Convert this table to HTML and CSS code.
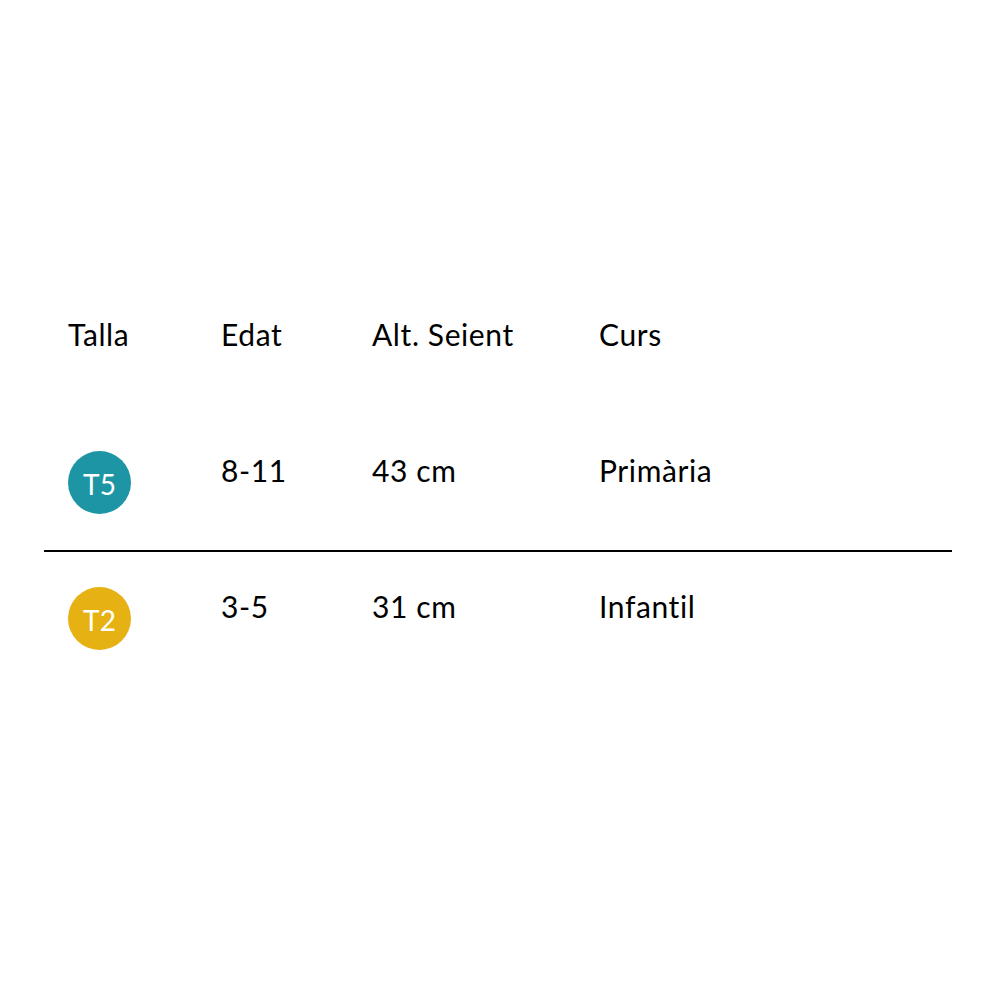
FILE: index.html
```html
<!DOCTYPE html>
<html lang="ca">
<head>
<meta charset="utf-8">
<title>Talles</title>
<link rel="stylesheet" href="styles.css">
</head>
<body>
<div class="table">
  <div class="row head">
    <div class="cell">Talla</div>
    <div class="cell">Edat</div>
    <div class="cell">Alt. Seient</div>
    <div class="cell">Curs</div>
  </div>
  <div class="row item">
    <div class="cell"><span class="badge teal">T5</span></div>
    <div class="cell">8-11</div>
    <div class="cell">43 cm</div>
    <div class="cell">Primària</div>
  </div>
  <div class="row item sep">
    <div class="cell"><span class="badge yellow">T2</span></div>
    <div class="cell">3-5</div>
    <div class="cell">31 cm</div>
    <div class="cell">Infantil</div>
  </div>
</div>
</body>
</html>
```

FILE: styles.css
```css
html, body {
  margin: 0;
  padding: 0;
  background: #fff;
}
body {
  font-family: Lato, "Open Sans", sans-serif;
  color: #000;
}
.table {
  margin: 316px 0 0 44px;
  width: 908px;
}
.row {
  display: grid;
  grid-template-columns: 153px 151px 227px 1fr;
  padding-left: 24px;
  align-items: start;
  font-size: 30px;
  line-height: 36px;
  letter-spacing: 0.6px;
}
.head {
  padding-bottom: 64px;
}
.item {
  padding-top: 35px;
  padding-bottom: 36px;
}
.item .cell {
  padding-top: 1px;
}
.sep {
  border-top: 2px solid #000;
}
.cell {
  white-space: nowrap;
}
.item .cell:first-child {
  padding-top: 0;
}
.badge {
  display: flex;
  align-items: center;
  justify-content: center;
  width: 63px;
  height: 63px;
  border-radius: 50%;
  color: #fff;
  font-size: 28px;
  line-height: 1;
  letter-spacing: 0;
  padding-top: 2px;
  box-sizing: border-box;
}
.teal { background: #1d95a5; }
.yellow { background: #e6b113; }
```
